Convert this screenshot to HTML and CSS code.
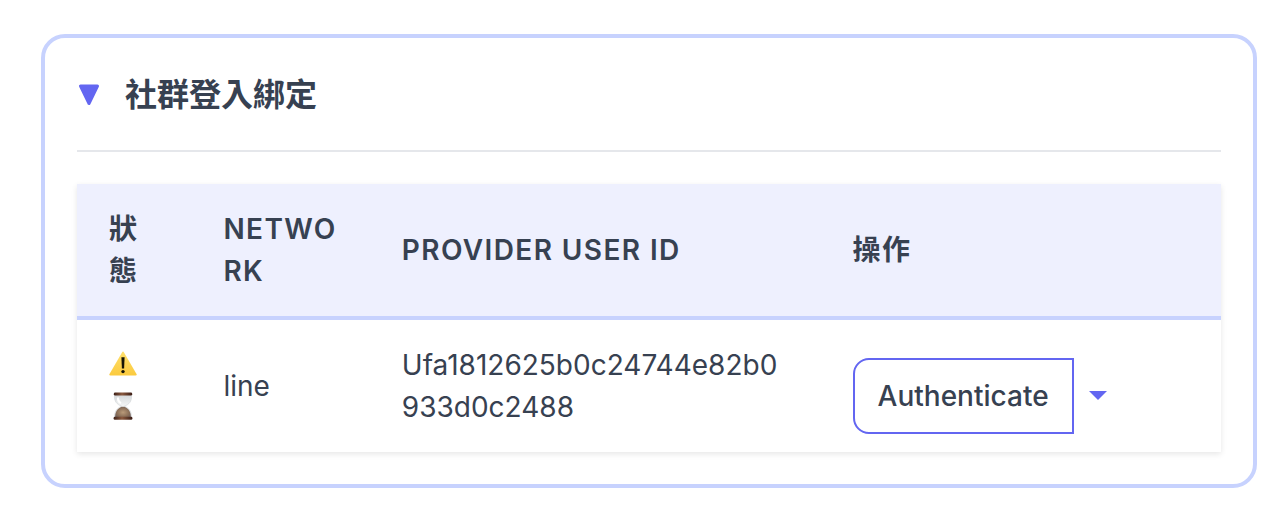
FILE: index.html
```html
<!DOCTYPE html>
<html lang="zh-Hant">
<head>
<meta charset="utf-8">
<meta name="viewport" content="width=device-width, initial-scale=1">
<title>社群登入綁定</title>
<link rel="stylesheet" href="styles.css">
</head>
<body>
<main class="page">
  <details class="panel" open>
    <summary class="panel-head">
      <svg class="marker" viewBox="0 0 22 22" aria-hidden="true"><path d="M2.5 2h17L11 19.5z" fill="#6366f1" stroke="#6366f1" stroke-width="3" stroke-linejoin="round"/></svg>
      <span class="panel-title">社群登入綁定</span>
    </summary>
    <table class="bindings">
      <colgroup>
        <col class="col-status"><col class="col-network"><col class="col-user"><col class="col-actions">
      </colgroup>
      <thead>
        <tr>
          <th scope="col">狀態</th>
          <th scope="col">NETWORK</th>
          <th scope="col">PROVIDER USER ID</th>
          <th scope="col">操作</th>
        </tr>
      </thead>
      <tbody>
        <tr>
          <td>
            <div class="status">
              <span class="status-item">
                <svg class="status-icon" viewBox="0 0 28 28" role="img" aria-label="Warning">
                  <defs><linearGradient id="warn" x1="0" y1="0" x2="0" y2="1"><stop offset="0" stop-color="#ffe06c"/><stop offset="1" stop-color="#fbca3e"/></linearGradient></defs>
                  <path d="M13 2.4Q14 .8 15 2.4L27.5 24Q28.3 25.6 26.5 25.6H1.5Q-.3 25.6.5 24z" fill="url(#warn)"/>
                  <path d="M12.4 7.2h3.2l-.5 11.2h-2.2z" fill="#161406"/>
                  <circle cx="14" cy="21.6" r="1.7" fill="#161406"/>
                </svg>
              </span>
              <span class="status-item">
                <svg class="status-icon" viewBox="0 0 28 28" role="img" aria-label="Pending">
                  <defs>
                    <linearGradient id="wood" x1="0" x2="1" y1="0" y2="0"><stop offset="0" stop-color="#3e2118"/><stop offset=".45" stop-color="#8b5a3f"/><stop offset="1" stop-color="#3b1d15"/></linearGradient>
                    <radialGradient id="sand" cx=".5" cy=".5" r=".65"><stop offset="0" stop-color="#b99a79"/><stop offset=".6" stop-color="#8b6f58"/><stop offset="1" stop-color="#675b5b"/></radialGradient>
                    <linearGradient id="glass" x1="0" x2="0" y1="0" y2="1"><stop offset="0" stop-color="#d5d9db"/><stop offset=".5" stop-color="#f5f6f6"/><stop offset="1" stop-color="#c4c8cb"/></linearGradient>
                  </defs>
                  <path d="M5.6 3C4.8 9.5 8 12.4 12.6 14.2C8 16 5 19.5 5.8 26H22.2C23 19.5 20 16 15.4 14.2C20 12.4 23.2 9.5 22.4 3z" fill="url(#glass)" stroke="#c9cdd1" stroke-width=".5"/>
                  <path d="M12.6 14.8C8.2 16.6 6 19.8 6.2 26H21.8C22 19.8 19.8 16.6 15.4 14.8z" fill="url(#sand)"/>
                  <path d="M9 6.2q-.2 3 2.4 4.6" fill="none" stroke="#fff" stroke-width="2" stroke-linecap="round"/>
                  <rect x="4.8" y=".4" width="18.4" height="3.2" rx="1.4" fill="url(#wood)"/>
                  <rect x="4.6" y="24.8" width="18.8" height="3" rx="1.3" fill="url(#wood)"/>
                </svg>
              </span>
            </div>
          </td>
          <td>line</td>
          <td>Ufa1812625b0c24744e82b0933d0c2488</td>
          <td class="actions-cell">
            <div class="actions">
              <button class="auth" type="button">Authenticate</button>
              <button class="more" type="button" aria-label="More actions"><svg class="caret" viewBox="0 0 18 10" aria-hidden="true"><path d="M0 0h18L9 9z" fill="#6366f1"/></svg></button>
            </div>
          </td>
        </tr>
      </tbody>
    </table>
  </details>
</main>
</body>
</html>
```
FILE: styles.css
```css
* {
  box-sizing: border-box;
}

body {
  margin: 0;
  background: #fff;
  color: #374151;
  font-family: Inter, "Noto Sans CJK TC", sans-serif;
  font-size: 28px;
  line-height: 42px;
}

.page {
  padding: 34px 31px 28px 41px;
}

.panel {
  padding: 32px;
  border: 4px solid #c7d2fe;
  border-radius: 24px;
}

.panel-head {
  display: flex;
  align-items: center;
  gap: 25px;
  padding: 1px 0 31px;
  margin-bottom: 32px;
  border-bottom: 2px solid #e5e7eb;
  list-style: none;
  cursor: pointer;
}

.panel-head::-webkit-details-marker {
  display: none;
}

.marker {
  width: 22px;
  height: 22px;
  margin-left: 1px;
}

.panel-title {
  font-size: 32px;
  font-weight: 600;
  line-height: 48px;
}

.bindings {
  width: 100%;
  table-layout: fixed;
  border-collapse: separate;
  border-spacing: 0;
  box-shadow: 0 2px 6px rgb(0 0 0 / 10%);
}

.col-status {
  width: 10%;
}

.col-network {
  width: 15.6%;
}

.col-user {
  width: 39.4%;
}

.col-actions {
  width: 35%;
}

.bindings th,
.bindings td {
  padding: 24px 32px;
  text-align: left;
  vertical-align: middle;
  overflow-wrap: anywhere;
}

.bindings th {
  background: #eef0fe;
  border-bottom: 4px solid #c7d2fe;
  font-weight: 600;
  letter-spacing: 0.05em;
}

.status {
  display: flex;
  flex-direction: column;
}

.status-item {
  display: flex;
  align-items: flex-start;
  height: 42px;
  padding-top: 6px;
}

.status-icon {
  width: 28px;
  height: 28px;
}

.bindings .actions-cell {
  padding-top: 38px;
  padding-bottom: 18px;
}

.actions {
  display: flex;
  align-items: center;
}

.auth,
.more {
  margin: 0;
  background: #fff;
  color: inherit;
  font: inherit;
  cursor: pointer;
}

.auth {
  padding: 15px 23px;
  border: 2px solid #6366f1;
  border-radius: 16px 0 0 16px;
  font-weight: 500;
}

.more {
  display: flex;
  align-items: center;
  padding: 15px;
  border: 0;
}

.caret {
  width: 18px;
  height: 10px;
}
```
